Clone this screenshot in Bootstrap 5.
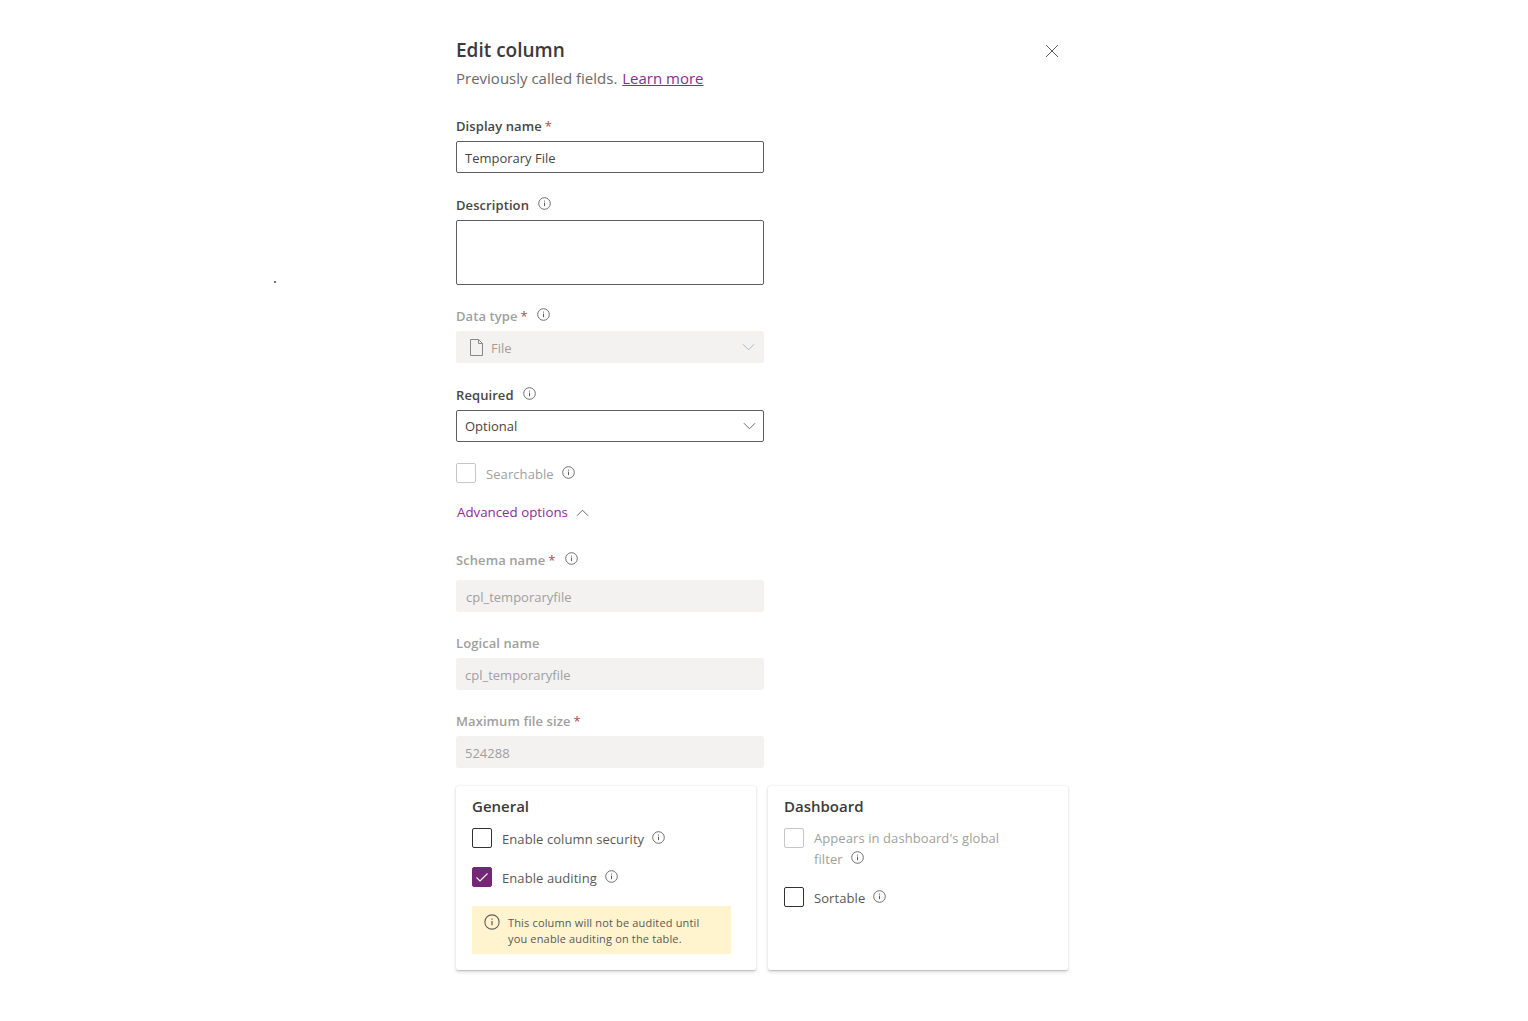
<!DOCTYPE html>
<html lang="en"><head><meta charset="utf-8"><title>Edit column</title>
<link href="https://cdn.jsdelivr.net/npm/bootstrap@5.3.0/dist/css/bootstrap.min.css" rel="stylesheet">
<style>
html,body{height:100%}
body{font-family:"Open Sans","Noto Sans",sans-serif;font-size:13px;color:#323130;background:#fff;position:relative}
.speck{position:absolute;left:274px;top:281px;width:2px;height:2px;background:#444;border-radius:50%}
.panel-x{width:612px;margin-left:456px;padding-top:38px}
.form-w{width:308px}
.ttl{font-size:19px;font-weight:600;line-height:24px;margin:0;color:#3b3a39}
.sub{font-size:15px;line-height:20px;margin-top:6px;color:#6b6967}
.sub a{color:#8a2b93;margin-left:1px}
.close-x{background:none;border:0;padding:0;width:16px;height:16px;margin:5px 8px 0 0;line-height:0}
.fld{margin-top:21px}
.fld-first{margin-top:28px}
.fld-22{margin-top:22px}
.lbl{font-size:13px;font-weight:600;line-height:20px;margin-bottom:5px;display:flex;align-items:center;color:#484644;letter-spacing:.08px}
.lbl.off{color:#a19f9d}
.lbl.wide{margin-bottom:10px}
.ast{color:#a4262c;margin-left:3px;font-weight:400}
.lbl .ast{opacity:.85}
.inf{width:13px;height:13px;flex:none;margin-left:9px;margin-top:-3px;color:#605e5c}
.form-control.fx,.form-select.fx{height:32px;border:1px solid #605e5c;border-radius:2px;font-size:13px;padding:1px 7px 0 8px;line-height:29px;color:#484644;box-shadow:none}
.form-control.ta{height:65px;resize:none}
.form-control.fx:disabled,.form-select.fx:disabled{background-color:#f3f2f1;border-color:#f3f2f1;color:#a19f9d;opacity:1}
.form-control.pad-9{padding-left:9px}
.form-select.fx{background-image:url("data:image/svg+xml,%3csvg xmlns='http://www.w3.org/2000/svg' viewBox='0 0 14 8'%3e%3cpath fill='none' stroke='%23605e5c' d='M1 1l6 6 6-6'/%3e%3c/svg%3e");background-size:13px 8px;background-position:right 7px center}
.form-select.fx:disabled{background-image:url("data:image/svg+xml,%3csvg xmlns='http://www.w3.org/2000/svg' viewBox='0 0 14 8'%3e%3cpath fill='none' stroke='%23a9b4c0' d='M1 1l6 6 6-6'/%3e%3c/svg%3e");background-position:right 8px top 11px}
.form-select.fx.sel-ic{padding:2px 7px 0 34px}
.file-ic{position:absolute;left:13px;top:8px;width:15px;height:17px;color:#8a8886}
.chk-row{display:flex;align-items:flex-start;gap:10px;margin:0}
.chk-row .form-check-input{width:20px;height:20px;margin:0;flex:none;border:1px solid #323130;border-radius:2px;box-shadow:none;opacity:1}
.chk-row .form-check-input:disabled{border-color:#c8c6c4;opacity:1;background-color:#fff}
.chk-row .form-check-input:checked{background-color:#742774;border-color:#742774;background-size:16px;background-image:url("data:image/svg+xml,%3csvg xmlns='http://www.w3.org/2000/svg' viewBox='0 0 16 16'%3e%3cpath fill='none' stroke='%23fff' stroke-width='1.1' d='M2.500 8.500l3.500 3.500 7.500-7.500'/%3e%3c/svg%3e")}
.chk-txt{font-size:13px;line-height:20px;color:#5a5856;padding-top:1px;letter-spacing:.08px}
.chk-txt.off{color:#a19f9d}
.chk-txt .inf{margin-left:8px;margin-top:-6px;vertical-align:middle;display:inline-block}
.adv{display:flex;align-items:center;gap:8px;margin:19px 0 0 1px;height:20px;font-size:13.3px;color:#8f2a9a;text-decoration:none}
.adv-ic{width:13px;height:8px}
.adv-gap{margin-top:27px}
.tile-row{display:flex;gap:12px;margin-top:18px}
.tile.card{width:300px;height:184px;border:0;border-radius:2px;box-shadow:0 1.6px 3.6px rgba(0,0,0,.16),0 .3px .9px rgba(0,0,0,.12);padding:10px 16px 0}
.tile-h{font-size:15px;font-weight:600;line-height:20px;margin:0 0 12px;color:#3b3a39}
.tile .chk-row+.chk-row{margin-top:18px}
.tile .chk-row.tight+.chk-row{margin-top:17px}
.note{margin-top:18px;width:259px;height:48px;background:#fff4ce;padding:9px 12px 0;display:flex;gap:8px;font-size:11px;line-height:16px;color:#5a5856;letter-spacing:.16px}
.note-txt{width:205px}
.note-ic{width:16px;height:16px;flex:none;margin-top:-1px;color:#605e5c}
.chk-txt.wrap-txt{max-width:200px;padding-top:0;line-height:21px}
</style></head>
<body>
<svg width="0" height="0" class="d-none"><defs>
<symbol id="i-info" viewBox="0 0 13 13"><circle cx="6.500" cy="6.500" r="5.800" fill="none" stroke="currentColor" stroke-width=".9"/><path d="M6.500 5.600v3.600M6.500 3.600v1" stroke="currentColor" stroke-width="1" fill="none"/></symbol>
</defs></svg>
<div class="speck"></div>
<main class="panel-x">
  <div class="d-flex justify-content-between align-items-start">
    <div>
      <h1 class="ttl">Edit column</h1>
      <div class="sub">Previously called fields. <a href="#">Learn more</a></div>
    </div>
    <button class="close-x" type="button" aria-label="Close"><svg width="16" height="16" viewBox="0 0 16 16"><path d="M2 2l12 12M14 2L2 14" stroke="#605e5c" stroke-width="1" fill="none"/></svg></button>
  </div>
  <form class="form-w">
    <div class="fld fld-first"><div class="lbl">Display name<span class="ast">*</span></div><input class="form-control fx" value="Temporary File"></div>
    <div class="fld fld-22"><div class="lbl">Description<svg class="inf"><use href="#i-info"/></svg></div><textarea class="form-control fx ta"></textarea></div>
    <div class="fld"><div class="lbl off">Data type<span class="ast">*</span><svg class="inf"><use href="#i-info"/></svg></div>
      <div class="position-relative"><select class="form-select fx sel-ic" disabled><option>File</option></select>
      <svg class="file-ic" viewBox="0 0 15 17"><path d="M1.500.5h8l4 4v12h-12zM9.500.5v4h4" fill="none" stroke="currentColor"/></svg></div></div>
    <div class="fld fld-22"><div class="lbl">Required<svg class="inf"><use href="#i-info"/></svg></div><select class="form-select fx"><option>Optional</option></select></div>
    <div class="fld"><label class="chk-row"><input class="form-check-input" type="checkbox" disabled><span class="chk-txt off">Searchable<svg class="inf"><use href="#i-info"/></svg></span></label></div>
    <a class="adv" href="#">Advanced options<svg class="adv-ic" viewBox="0 0 14 8"><path d="M1 7l6-6 6 6" fill="none" stroke="#605e5c"/></svg></a>
    <div class="fld adv-gap"><div class="lbl off wide">Schema name<span class="ast">*</span><svg class="inf"><use href="#i-info"/></svg></div><input class="form-control fx pad-9" disabled value="cpl_temporaryfile"></div>
    <div class="fld"><div class="lbl off">Logical name</div><input class="form-control fx" disabled value="cpl_temporaryfile"></div>
    <div class="fld"><div class="lbl off">Maximum file size<span class="ast">*</span></div><input class="form-control fx" disabled value="524288"></div>
  </form>
  <div class="tile-row">
    <section class="tile card">
      <h2 class="tile-h">General</h2>
      <label class="chk-row"><input class="form-check-input" type="checkbox"><span class="chk-txt">Enable column security<svg class="inf"><use href="#i-info"/></svg></span></label>
      <label class="chk-row"><input class="form-check-input" type="checkbox" checked><span class="chk-txt">Enable auditing<svg class="inf"><use href="#i-info"/></svg></span></label>
      <div class="note"><svg class="note-ic"><use href="#i-info"/></svg><div class="note-txt">This column will not be audited until you enable auditing on the table.</div></div>
    </section>
    <section class="tile card">
      <h2 class="tile-h">Dashboard</h2>
      <label class="chk-row tight"><input class="form-check-input" type="checkbox" disabled><span class="chk-txt off wrap-txt">Appears in dashboard's global filter<svg class="inf"><use href="#i-info"/></svg></span></label>
      <label class="chk-row"><input class="form-check-input" type="checkbox"><span class="chk-txt">Sortable<svg class="inf"><use href="#i-info"/></svg></span></label>
    </section>
  </div>
</main>
<script src="https://cdn.jsdelivr.net/npm/bootstrap@5.3.0/dist/js/bootstrap.bundle.min.js"></script>
</body></html>
